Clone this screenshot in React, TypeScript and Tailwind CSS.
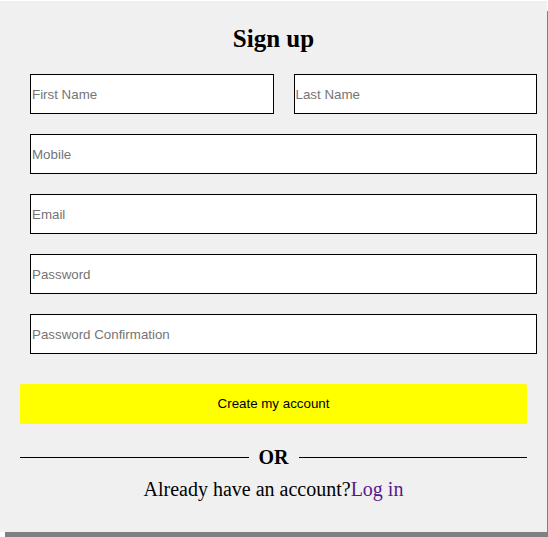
import React from 'react';

const fields = ['Mobile', 'Email', 'Password', 'Password Confirmation'];

const inputClass =
  "h-10 w-full border border-black bg-white pl-px text-[13.33px] text-black outline-none placeholder:text-[#757575] font-['Liberation_Sans',Arial,sans-serif]";

const App: React.FC = () => {
  return (
    <div className="min-h-screen bg-white pt-px">
      <div className="w-[547px] h-[531px] bg-[#f0f0f0] shadow-[5px_10px_0_#808080] pt-[22px] font-['Liberation_Serif','Times_New_Roman',serif]">
        <h2 className="text-center text-[25px] leading-8 font-bold text-black">Sign up</h2>

        {/* Form fields */}
        <div className="mt-[19px] ml-[30px] mr-[10px] flex flex-col gap-5">
          <div className="flex gap-5">
            <input className={inputClass} placeholder="First Name" />
            <input className={inputClass} placeholder="Last Name" />
          </div>
          {fields.map((f) => (
            <input
              key={f}
              className={inputClass}
              placeholder={f}
              type={f.startsWith('Password') ? 'password' : 'text'}
            />
          ))}
        </div>

        <div className="mx-[20px] mt-[30px]">
          <button className="h-10 w-full rounded-[2px] bg-[#ffff00] text-[13.33px] text-black font-['Liberation_Sans',Arial,sans-serif]">
            Create my account
          </button>
        </div>

        {/* Divider */}
        <div className="mx-[20px] mt-[22px] flex items-center">
          <div className="h-px flex-1 bg-black" />
          <span className="mx-[10px] text-[20px] leading-[23px] font-bold text-black">OR</span>
          <div className="h-px flex-1 bg-black" />
        </div>

        <p className="mt-[9px] text-center text-[20px] leading-[23px] text-black">
          Already have an account?
          <a href="#" className="text-[#551a8b]">Log in</a>
        </p>
      </div>
    </div>
  );
};

export default App;
